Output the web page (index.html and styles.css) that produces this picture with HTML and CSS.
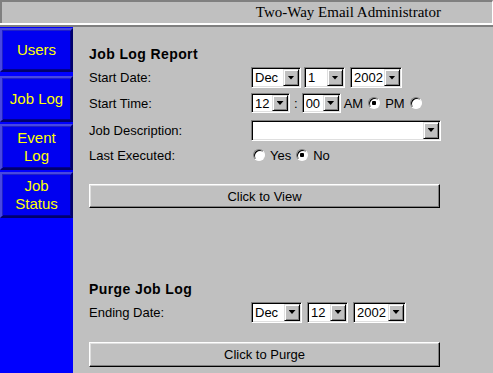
FILE: index.html
```html
<!DOCTYPE html>
<html lang="en">
<head>
    <meta charset="UTF-8">
    <title>Two-Way Email Administrator</title>
    <link rel="stylesheet" href="styles.css">
</head>
<body>

    <div class="banner">Two-Way Email Administrator</div>
    <div class="rule"></div>

    <div class="frame">
        <nav class="sidebar">
            <a class="navbtn first" href="#">Users</a>
            <a class="navbtn" href="#">Job Log</a>
            <a class="navbtn" href="#">Event<br>Log</a>
            <a class="navbtn" href="#">Job<br>Status</a>
        </nav>

        <main class="content">
            <h3 class="title">Job Log Report</h3>

            <div class="row r1">
                <span class="label">Start Date:</span>
                <span class="pick w-mon"><select><option>Dec</option></select><span class="drop"></span></span>
                <span class="pick w-day gap3"><select><option>1</option></select><span class="drop"></span></span>
                <span class="pick w-year gap5"><select><option>2002</option></select><span class="drop"></span></span>
            </div>

            <div class="row r2">
                <span class="label">Start Time:</span>
                <span class="pick w-time"><select><option>12</option></select><span class="drop"></span></span>
                <span class="colon">:</span>
                <span class="pick w-time"><select><option>00</option></select><span class="drop"></span></span>
                <span class="opt">AM</span><input type="radio" name="ampm" checked>
                <span class="opt">PM</span><input type="radio" name="ampm">
            </div>

            <div class="row r3">
                <span class="label">Job Description:</span>
                <span class="pick w-desc"><select><option></option></select><span class="drop"></span></span>
            </div>

            <div class="row r4">
                <span class="label">Last Executed:</span>
                <input type="radio" name="last" class="first-radio"><span class="opt">Yes</span>
                <input type="radio" name="last" checked><span class="opt">No</span>
            </div>

            <button class="wide view">Click to View</button>

            <h3 class="title purge">Purge Job Log</h3>

            <div class="row r5">
                <span class="label">Ending Date:</span>
                <span class="pick w-mon2"><select><option>Dec</option></select><span class="drop"></span></span>
                <span class="pick w-day gap5"><select><option>12</option></select><span class="drop"></span></span>
                <span class="pick w-year2 gap5"><select><option>2002</option></select><span class="drop"></span></span>
            </div>

            <button class="wide purge-btn">Click to Purge</button>
        </main>
    </div>

</body>
</html>
```

FILE: styles.css
```css
body {
    margin: 0;
    height: 373px;
    overflow: hidden;
    background: #c0c0c0;
    font-family: "Liberation Sans", Arial, sans-serif;
    color: #000;
}

.banner {
    height: 21px;
    line-height: 21px;
    border-top: 2px solid #808080;
    border-left: 2px solid #808080;
    border-right: 1px solid #fff;
    padding-right: 51px;
    text-align: right;
    font-family: "Liberation Serif", "Times New Roman", serif;
    font-size: 15px;
}

.rule {
    border-top: 2px solid #fff;
    border-bottom: 2px solid #808080;
}

.frame {
    display: flex;
    height: 346px;
}

/* left nav */
.sidebar {
    width: 73px;
    background: #0000ff;
    padding-top: 1px;
    display: flex;
    flex-direction: column;
}

.navbtn {
    box-sizing: border-box;
    height: 46px;
    margin-top: 2px;
    display: flex;
    align-items: center;
    justify-content: center;
    text-align: center;
    color: #ffff00;
    font-size: 15px;
    line-height: 18px;
    text-decoration: none;
    background: #0000f0;
    border: 2px solid;
    border-color: #4848e0 #00006c #00006c #4848e0;
    box-shadow: inset 1px 1px #2020c8, inset -1px -1px #000090;
}

.navbtn.first {
    height: 44px;
    margin-top: 0;
}

.navbtn.first + .navbtn {
    margin-top: 4px;
}

/* main area */
.content {
    flex: 1;
    padding: 19px 0 0 16px;
}

.title {
    margin: 0;
    height: 16px;
    font-size: 14px;
    line-height: 16px;
    font-weight: bold;
    letter-spacing: 0.4px;
}

.title.purge {
    margin-top: 73px;
}

.row {
    display: flex;
    align-items: center;
    font-size: 13px;
}

.label {
    width: 162px;
    flex: none;
}

.r1 { margin-top: 4px; height: 23px; }
.r2 { margin-top: 3px; height: 22px; }
.r3 { margin-top: 5px; height: 22px; }
.r4 { margin-top: 3px; height: 22px; }
.r5 { margin-top: 3px; height: 24px; }

/* fake win9x select */
.pick {
    box-sizing: border-box;
    height: 21px;
    display: inline-flex;
    background: #fff;
    border: 1px solid;
    border-color: #808080 #fff #fff #808080;
    box-shadow: inset 1px 1px #000, inset -1px -1px #dfdfdf;
    padding: 1px;
}

.pick select {
    -webkit-appearance: none;
    appearance: none;
    flex: 1;
    min-width: 0;
    border: 0;
    background: transparent;
    font-family: inherit;
    font-size: 13px;
    padding: 0 0 0 2px;
    margin: 0;
    color: #000;
    outline: none;
}

.drop {
    box-sizing: border-box;
    width: 16px;
    flex: none;
    background: #c0c0c0;
    border: 1px solid;
    border-color: #dfdfdf #000 #000 #dfdfdf;
    box-shadow: inset 1px 1px #fff, inset -1px -1px #808080;
    display: flex;
    align-items: center;
    justify-content: center;
}

.drop::before {
    content: "";
    width: 7px;
    height: 4px;
    background: #000;
    clip-path: polygon(0 0, 100% 0, 50% 100%);
}

.w-mon { width: 50px; }
.w-mon2 { width: 51px; }
.w-day { width: 41px; }
.w-year { width: 52px; }
.w-year2 { width: 53px; }
.w-time { width: 39px; height: 20px; }
.w-desc { width: 190px; }

.gap3 { margin-left: 3px; }
.gap5 { margin-left: 5px; }

.colon {
    margin: 0 4px 0 4px;
}

.opt {
    margin: 0 3px;
}

input[type="radio"] {
    -webkit-appearance: none;
    appearance: none;
    box-sizing: border-box;
    width: 12px;
    height: 12px;
    margin: 0 2px;
    border-radius: 50%;
    background: #fff;
    border: 1px solid;
    border-color: #808080 #fff #fff #808080;
    box-shadow: inset 1px 1px #000;
}

input[type="radio"]:checked {
    background: radial-gradient(circle, #000 0 2px, #fff 2.5px);
}

.first-radio {
    margin-left: 2px;
}

.wide {
    display: block;
    box-sizing: border-box;
    width: 351px;
    height: 24px;
    margin-top: 18px;
    padding: 0;
    background: #c0c0c0;
    font-family: inherit;
    font-size: 13px;
    color: #000;
    border: 1px solid;
    border-color: #fff #000 #000 #fff;
    box-shadow: inset -1px -1px #808080, inset 1px 1px #dfdfdf;
}

.purge-btn {
    height: 25px;
}
```
